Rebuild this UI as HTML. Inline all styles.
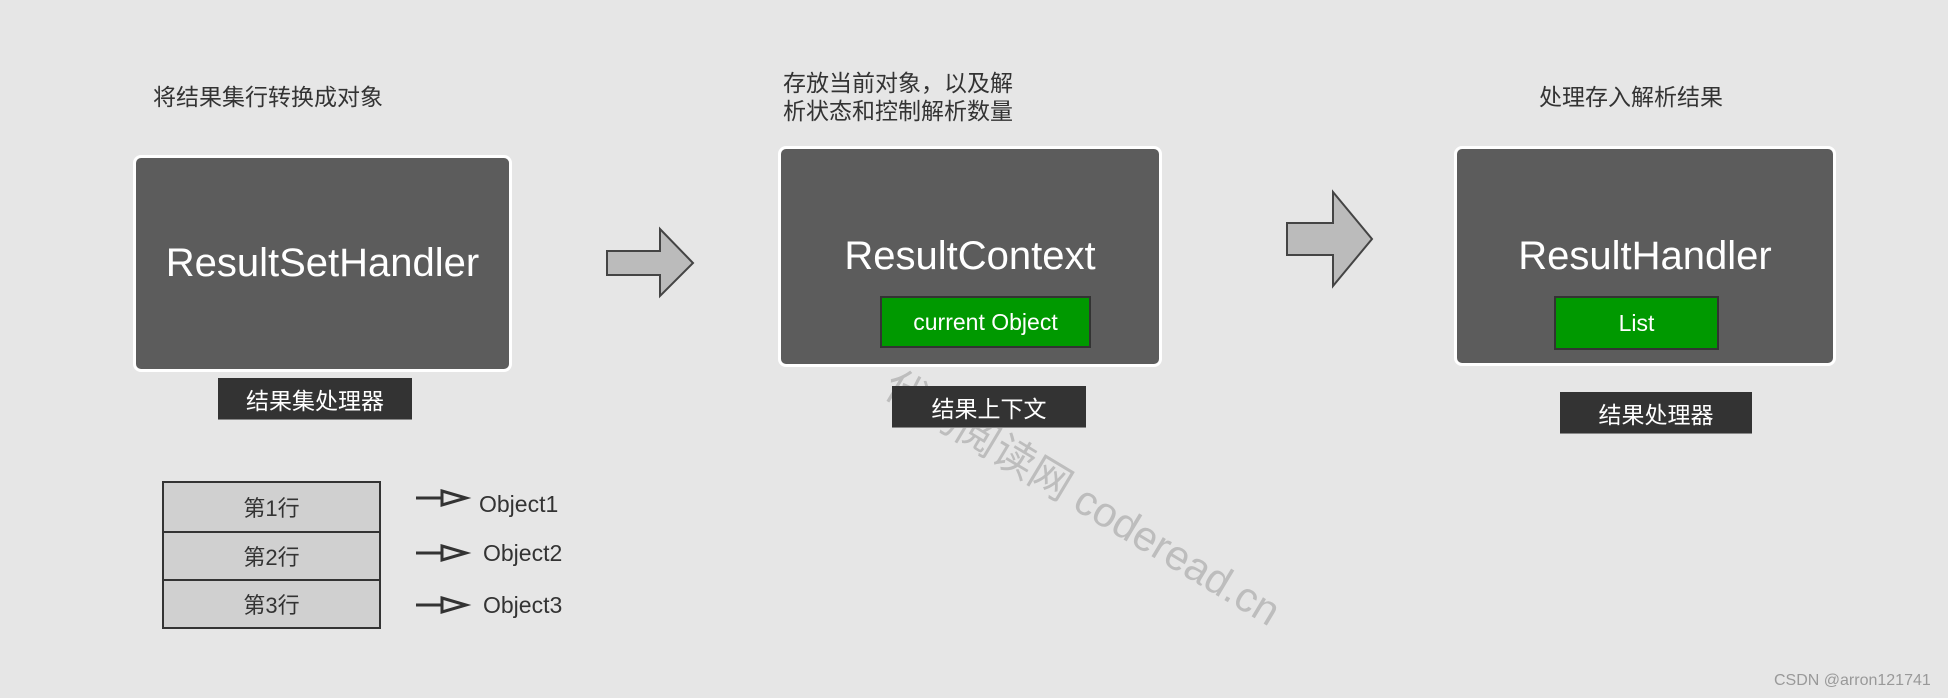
<!DOCTYPE html>
<html><head><meta charset="utf-8"><style>
*{margin:0;padding:0;box-sizing:border-box}
body{width:1948px;height:698px;background:#e6e6e6;position:relative;overflow:hidden;font-family:"Liberation Sans","Noto Sans CJK SC",sans-serif}
.a{position:absolute}
.t{color:#333;font-size:23px;line-height:28px;white-space:nowrap}
.box{position:absolute;background:#5c5c5c;border:3px solid #fff;border-radius:8px}
.big{position:absolute;left:0;right:0;text-align:center;color:#fff;font-size:40px;line-height:40px;white-space:nowrap}
.g{position:absolute;background:#009900;border:2px solid #333;color:#fff;font-size:23px;display:flex;align-items:center;justify-content:center}
.lab{position:absolute;background:#333;color:#fff;font-size:23px;display:flex;align-items:center;justify-content:center;border-bottom:1px solid #888}
.row{position:absolute;left:162px;width:219px;background:#d0d0d0;border:2px solid #333;color:#333;font-size:22px;display:flex;align-items:center;justify-content:center}
.obj{position:absolute;color:#333;font-size:23px;line-height:26px}
</style></head><body>

<div class="a" style="left:900px;top:362px;transform:rotate(31deg);transform-origin:0 0;color:#bdbdbd;font-size:42px;white-space:nowrap;line-height:46px">代码阅读网 coderead.cn</div>

<div class="a t" style="left:153px;top:83px">将结果集行转换成对象</div>
<div class="a t" style="left:783px;top:69px">存放当前对象，以及解<br>析状态和控制解析数量</div>
<div class="a t" style="left:1539px;top:83px">处理存入解析结果</div>

<div class="box" style="left:133px;top:155px;width:379px;height:217px"><div class="big" style="top:85px">ResultSetHandler</div></div>
<div class="lab" style="left:218px;top:378px;width:194px;height:42px">结果集处理器</div>

<div class="box" style="left:778px;top:146px;width:384px;height:221px"><div class="big" style="top:87px">ResultContext</div></div>
<div class="g" style="left:880px;top:296px;width:211px;height:52px">current Object</div>
<div class="lab" style="left:892px;top:386px;width:194px;height:42px">结果上下文</div>

<div class="box" style="left:1454px;top:146px;width:382px;height:220px"><div class="big" style="top:87px">ResultHandler</div></div>
<div class="g" style="left:1554px;top:296px;width:165px;height:54px">List</div>
<div class="lab" style="left:1560px;top:392px;width:192px;height:42px">结果处理器</div>

<svg class="a" style="left:0;top:0" width="1948" height="698">
<polygon points="607,251 660,251 660,229 693,263 660,296 660,275 607,275" fill="#bbb" stroke="#444" stroke-width="2"/>
<polygon points="1287,223 1333,223 1333,192 1372,239 1333,286 1333,255 1287,255" fill="#bbb" stroke="#444" stroke-width="2"/>
<g stroke="#333" stroke-width="3" fill="none">
<line x1="416" y1="498" x2="441" y2="498"/><polygon points="442,491 466,498 442,505"/>
<line x1="416" y1="553" x2="441" y2="553"/><polygon points="442,546 466,553 442,560"/>
<line x1="416" y1="605" x2="441" y2="605"/><polygon points="442,598 466,605 442,612"/>
</g>
</svg>

<div class="row" style="top:481px;height:52px">第1行</div>
<div class="row" style="top:531px;height:50px">第2行</div>
<div class="row" style="top:579px;height:50px">第3行</div>
<div class="obj" style="left:479px;top:491px">Object1</div>
<div class="obj" style="left:483px;top:540px">Object2</div>
<div class="obj" style="left:483px;top:592px">Object3</div>

<div class="a" style="left:1774px;top:671px;color:#999;font-size:16px;line-height:20px">CSDN @arron121741</div>
</body></html>
